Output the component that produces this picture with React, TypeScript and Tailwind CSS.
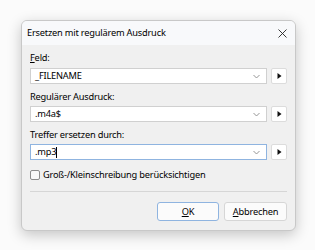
import React from "react";

const T = "text-[9.25px] tracking-[-0.2px] text-black";

function Chevron() {
  return (
    <svg width="7" height="5" viewBox="0 0 7 5" className="shrink-0">
      <path d="M0.5 1 L3.5 4 L6.5 1" fill="none" stroke="#8a8a8a" strokeWidth="0.9" />
    </svg>
  );
}

function ArrowBtn() {
  return (
    <div className="w-[16px] h-[16px] bg-white border border-[#dcdcdc] rounded-[2px] flex items-center justify-center">
      <svg width="5" height="6" viewBox="0 0 5 6">
        <path d="M0.5 0 L4.5 3 L0.5 6 Z" fill="#111" />
      </svg>
    </div>
  );
}

function Combo({ value, focused, cursor }: { value: string; focused?: boolean; cursor?: boolean }) {
  return (
    <div className="flex items-center gap-[4px] h-[16px]">
      <div
        className={
          "flex-1 h-[16px] bg-white border flex items-center pl-[4px] pr-[6px] " +
          (focused ? "border-[#8fb4e0]" : "border-[#d0d0d0]")
        }
      >
        <span className="flex-1 text-[9.25px] tracking-[-0.2px] text-black leading-none flex items-center">
          {value}
          {cursor && <span className="inline-block w-[1px] h-[11px] bg-black" />}
        </span>
        <Chevron />
      </div>
      <ArrowBtn />
    </div>
  );
}

export default function App() {
  return (
    <div
      className="w-[315px] h-[250px] bg-[#fbfbfb] pt-[20px] pl-[21px] overflow-hidden"
      style={{ fontFamily: '"Noto Sans", "Open Sans", sans-serif' }}
    >
      <div className="w-[275px] h-[211px] bg-[#f0f0f0] border border-[#c8c8c8] rounded-[6px] shadow-[0_4px_14px_rgba(0,0,0,0.22)] overflow-hidden flex flex-col">
        <div className="h-[24px] bg-[#f8f9fb] flex items-center justify-between pl-[5px] pr-[8px] shrink-0">
          <span className="text-[9.25px] tracking-[-0.2px] text-black leading-none">Ersetzen mit regulärem Ausdruck</span>
          <svg width="9" height="9" viewBox="0 0 9 9">
            <path d="M0.5 0.5 L8.5 8.5 M8.5 0.5 L0.5 8.5" stroke="#222" strokeWidth="0.9" />
          </svg>
        </div>
        <div className="flex flex-col pl-[8px] pr-[8px]">
          <div className="h-[12px] mt-[7px] text-[9.25px] tracking-[-0.2px] text-black leading-[12px]">
            <span className="underline underline-offset-[1px]">F</span>eld:
          </div>
          <div className="mt-[4px]">
            <Combo value="_FILENAME" />
          </div>
          <div className="h-[12px] mt-[7px] text-[9.25px] tracking-[-0.2px] text-black leading-[12px]">Regulärer Ausdruck:</div>
          <div className="mt-[3px]">
            <Combo value=".m4a$" />
          </div>
          <div className="h-[12px] mt-[7px] text-[9.25px] tracking-[-0.2px] text-black leading-[12px]">Treffer ersetzen durch:</div>
          <div className="mt-[3px]">
            <Combo value=".mp3" focused cursor />
          </div>
          <div className="flex items-center gap-[3px] mt-[9px] h-[12px]">
            <div className="w-[10px] h-[10px] bg-[#f8f8f8] border border-[#8c8c8c] rounded-[2px]" />
            <span className="text-[9.25px] tracking-[-0.2px] text-black leading-none">Groß-/Kleinschreibung berücksichtigen</span>
          </div>
          <div className="h-[1px] bg-[#d6d6d6] mt-[10px]" />
          <div className="flex justify-end gap-[5px] mt-[10px]">
            <div className="w-[62px] h-[19px] bg-[#fbfbfb] border border-[#8fb4e0] rounded-[3px] flex items-center justify-center text-[9.25px] tracking-[-0.2px] text-black leading-none">
              <span><span className="underline underline-offset-[1px]">O</span>K</span>
            </div>
            <div className="w-[63px] h-[19px] bg-[#fbfbfb] border border-[#d6d6d6] rounded-[3px] flex items-center justify-center text-[9.25px] tracking-[-0.2px] text-black leading-none">
              <span><span className="underline underline-offset-[1px]">A</span>bbrechen</span>
            </div>
          </div>
        </div>
      </div>
    </div>
  );
}
